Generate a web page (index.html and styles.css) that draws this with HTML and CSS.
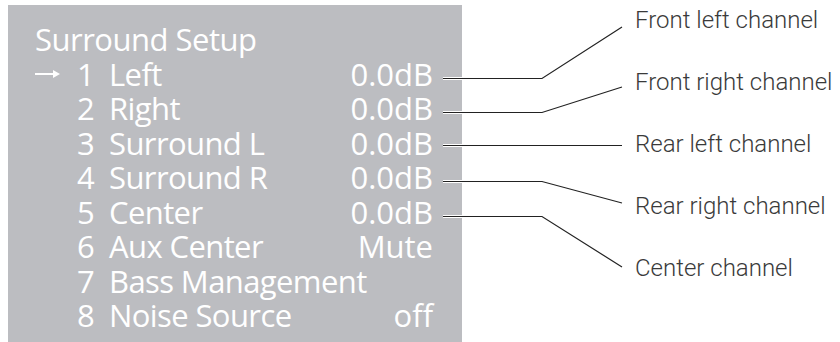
FILE: index.html
```html
<!DOCTYPE html>
<html lang="en">
<head>
  <meta charset="UTF-8">
  <title>Surround Setup</title>
  <link rel="stylesheet" href="styles.css">
</head>
<body>
<div class="figure">
  <div class="osd">
    <div class="osd-title">Surround Setup</div>
    <div class="osd-row">
      <span class="cursor"><svg width="25" height="10" viewBox="0 0 25 10"><path d="M0 5H21" stroke="#fff" stroke-width="2"/><path d="M18 1L25 5L18 9Z" fill="#fff"/></svg></span>
      <span class="num">1</span><span class="name">Left</span><span class="val">0.0dB</span>
    </div>
    <div class="osd-row"><span class="cursor"></span><span class="num">2</span><span class="name">Right</span><span class="val">0.0dB</span></div>
    <div class="osd-row"><span class="cursor"></span><span class="num">3</span><span class="name">Surround L</span><span class="val">0.0dB</span></div>
    <div class="osd-row"><span class="cursor"></span><span class="num">4</span><span class="name">Surround R</span><span class="val">0.0dB</span></div>
    <div class="osd-row"><span class="cursor"></span><span class="num">5</span><span class="name">Center</span><span class="val">0.0dB</span></div>
    <div class="osd-row"><span class="cursor"></span><span class="num">6</span><span class="name">Aux Center</span><span class="val">Mute</span></div>
    <div class="osd-row"><span class="cursor"></span><span class="num">7</span><span class="name">Bass Management</span><span class="val"></span></div>
    <div class="osd-row"><span class="cursor"></span><span class="num">8</span><span class="name">Noise Source</span><span class="val">off</span></div>
  </div>

  <div class="callouts">
    <div class="callout">Front left channel</div>
    <div class="callout">Front right channel</div>
    <div class="callout">Rear left channel</div>
    <div class="callout">Rear right channel</div>
    <div class="callout">Center channel</div>
  </div>

  <!-- leader lines -->
  <svg class="leaders" width="840" height="342" viewBox="0 0 840 342">
    <g stroke="#fff" stroke-width="3">
      <path d="M443 78.5H462"/>
      <path d="M443 112.5H462"/>
      <path d="M443 145.5H462"/>
      <path d="M443 181.5H462"/>
      <path d="M443 216.5H462"/>
    </g>
    <g stroke="#222" stroke-width="1.2" fill="none">
      <path d="M443 78.5H542L622 27"/>
      <path d="M443 112.5H542L622 87"/>
      <path d="M443 145.5H622"/>
      <path d="M443 181.5H542L622 203"/>
      <path d="M443 216.5H542L622 267"/>
    </g>
  </svg>
</div>
</body>
</html>
```

FILE: styles.css
```css
body{margin: 0; background: #fff;}
.figure{position: relative; width: 840px; height: 342px; display: flex; overflow: hidden;}

.osd{
  width: 454px;
  height: 340px;
  margin: 5px 0 0 8px;
  padding: 17px 29px 0 27px;
  box-sizing: border-box;
  background: #bcbdc1;
  color: #fff;
  font-family: "Open Sans", sans-serif;
  font-size: 31px;
  line-height: 34.5px;
}
.osd-title{letter-spacing: -0.5px;}
.osd-row{display: grid; grid-template-columns: 42px 32px 1fr auto; align-items: center;}
.osd-row .name{letter-spacing: -0.6px;}
.cursor{display: flex; align-items: center; height: 34px;}
.cursor svg{display: block;}

.callouts{
  margin-left: 173px;
  display: flex;
  flex-direction: column;
  gap: 22px;
  font-family: Roboto, "Liberation Sans", sans-serif;
  font-weight: 300;
  font-size: 24px;
  line-height: 40px;
  color: #3a3a3a;
}
.callout{white-space: nowrap;}

.leaders{position: absolute; left: 0; top: 0;}
```
